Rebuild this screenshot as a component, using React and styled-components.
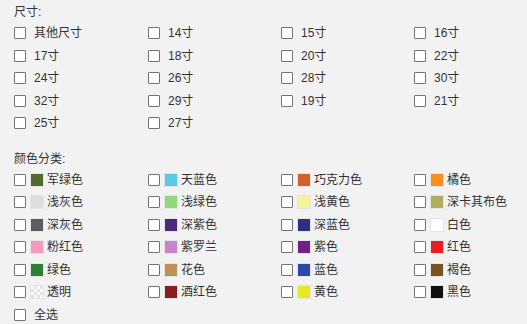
import styled, { createGlobalStyle } from "styled-components";

const GlobalStyle = createGlobalStyle`
  html, body {
    margin: 0;
    padding: 0;
    background: #f2f2f2;
  }
  body {
    font-family: "Liberation Sans", "Noto Sans CJK SC", sans-serif;
    font-size: 12px;
    color: #333;
  }
`;

const Panel = styled.div`
  width: 527px;
  height: 324px;
  padding: 2px 0 0 14px;
  box-sizing: border-box;
  overflow: hidden;
`;

const Title = styled.div`
  height: 20px;
  line-height: 20px;
  margin-top: ${({ $gap }) => $gap || 0}px;
`;

const Grid = styled.div`
  display: grid;
  grid-template-columns: 134px 133px 133px 120px;
  grid-auto-rows: 22.5px;
`;

const Item = styled.label`
  display: flex;
  align-items: center;
  white-space: nowrap;
`;

const Box = styled.span`
  display: inline-block;
  width: 12px;
  height: 12px;
  box-sizing: border-box;
  border: 1px solid #737373;
  background: #fff;
  border-radius: 1px;
  flex-shrink: 0;
`;

const Label = styled.span`
  margin-left: ${({ $swatch }) => ($swatch ? 3 : 8)}px;
  line-height: 14px;
`;

const Swatch = styled.span`
  display: inline-block;
  width: 14px;
  height: 14px;
  margin-left: 4px;
  box-sizing: border-box;
  border: 1px solid #e4e4e4;
  background: ${({ $bg }) => $bg};
  flex-shrink: 0;
`;

const checker =
  "repeating-conic-gradient(#e2e2e2 0% 25%, #fbfbfb 0% 50%) 0 0 / 6px 6px";

const sizes = [
  "其他尺寸", "14寸", "15寸", "16寸",
  "17寸", "18寸", "20寸", "22寸",
  "24寸", "26寸", "28寸", "30寸",
  "32寸", "29寸", "19寸", "21寸",
  "25寸", "27寸",
];

const colors = [
  ["军绿色", "#536b2c"], ["天蓝色", "#5bc9e1"], ["巧克力色", "#d45f27"], ["橘色", "#f5901f"],
  ["浅灰色", "#dedede"], ["浅绿色", "#8fd87c"], ["浅黄色", "#f3f59c"], ["深卡其布色", "#b1ad5f"],
  ["深灰色", "#595c61"], ["深紫色", "#4b2a7b"], ["深蓝色", "#2c3280"], ["白色", "#ffffff"],
  ["粉红色", "#f59bbb"], ["紫罗兰", "#c784cb"], ["紫色", "#741f88"], ["红色", "#ec1c24"],
  ["绿色", "#2f7f35"], ["花色", "linear-gradient(135deg, #d9854a, #a69a5c)"], ["蓝色", "#2c48ae"], ["褐色", "#7b5322"],
  ["透明", checker], ["酒红色", "#8a1c22"], ["黄色", "#e8e824"], ["黑色", "#101010"],
];

const App = () => {
  return (
    <Panel>
      <GlobalStyle />
      <Title>尺寸:</Title>
      <Grid>
        {sizes.map((s) => (
          <Item key={s}>
            <Box />
            <Label>{s}</Label>
          </Item>
        ))}
      </Grid>

      <Title $gap={14}>颜色分类:</Title>
      <Grid>
        {colors.map(([name, bg]) => (
          <Item key={name}>
            <Box />
            <Swatch $bg={bg} />
            <Label $swatch>{name}</Label>
          </Item>
        ))}
        <Item>
          <Box />
          <Label>全选</Label>
        </Item>
      </Grid>
    </Panel>
  );
};

export default App;
